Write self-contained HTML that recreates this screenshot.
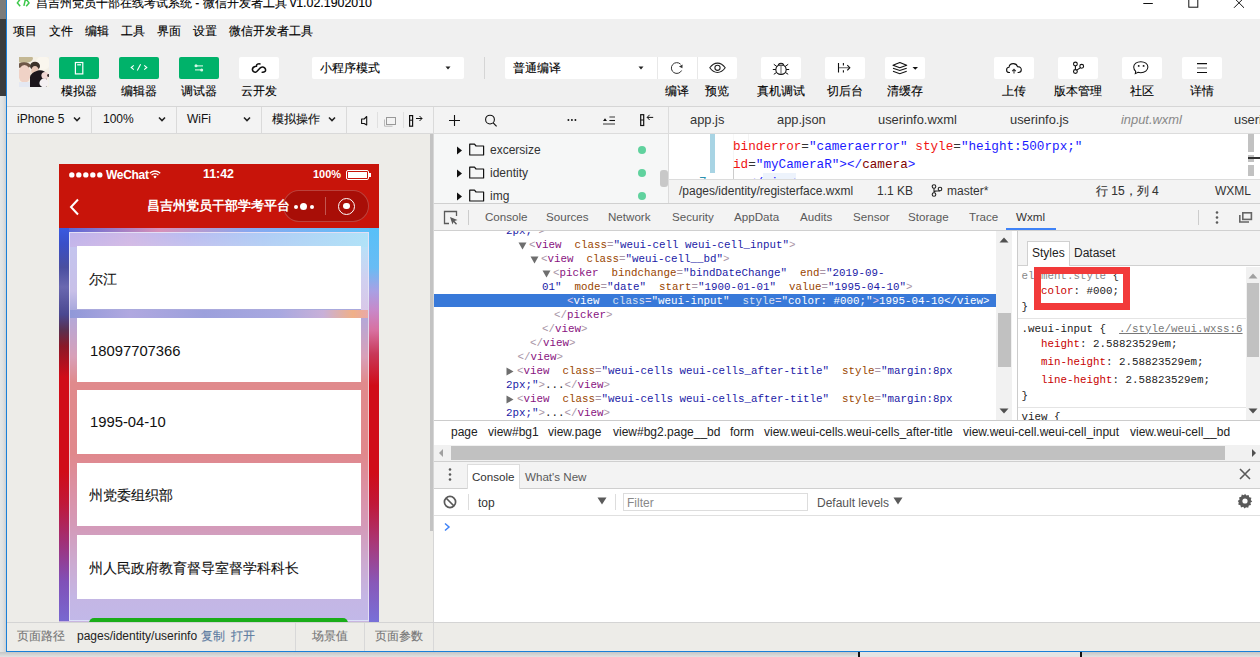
<!DOCTYPE html>
<html><head><meta charset="utf-8">
<style>
*{box-sizing:border-box;margin:0;padding:0}
html,body{width:1260px;height:657px;overflow:hidden;background:#dcdcdc;font-family:"Liberation Sans",sans-serif;color:#000}
.a{position:absolute}
.t{position:absolute;white-space:nowrap;line-height:1}
.mono{font-family:"Liberation Mono",monospace}
.btn{position:absolute;top:57px;width:40px;height:22px;border-radius:2px;background:#fff}
.gbtn{background:#00b26a}
.lbl{position:absolute;top:85px;font-size:12px;line-height:13px;white-space:nowrap;color:#000}
.vd{position:absolute;width:1px;background:#d5d5d5}
.hd{position:absolute;height:1px;background:#d5d5d5}
</style></head><body>
<!-- desktop strip -->
<div class="a" style="left:0;top:0;width:6px;height:19px;background:#7b7b7b"></div>
<div class="a" style="left:0;top:19px;width:6px;height:77px;background:#3b3b3b"></div>
<div class="a" style="left:0;top:96px;width:6px;height:561px;background:linear-gradient(90deg,#e4e6e6,#dfe1e1 50%,#cdd0d2)"></div>
<!-- window -->
<div class="a" id="win" style="left:6px;top:0;width:1254px;height:652px;background:#f0f0f0;border-left:1px solid #1a7fd8;border-bottom:1px solid #1a7fd8;overflow:hidden">
</div>
<!-- title bar -->
<div class="a" style="left:7px;top:0;width:1253px;height:19px;background:#fff"></div>
<svg class="a" style="left:12px;top:0" width="24" height="10"><path d="M8.2 -0.8L5.4 2.9L8.2 6.2M13.4 -0.5L11.9 5.8M14.2 -0.8L17 2.9L14.2 6.2" stroke="#3cc84a" stroke-width="1.5" fill="none"/></svg>
<div class="t" style="-webkit-text-stroke:0.12px currentColor;left:36px;top:-3px;font-size:12px;color:#000">昌吉州党员干部在线考试系统 - 微信开发者工具 <span style="font-size:12.4px">v1.02.1902010</span></div>
<svg class="a" style="left:1140px;top:0" width="110" height="10"><path d="M3.3 3.5H12.8" stroke="#111" stroke-width="1"/><rect x="48.8" y="-3" width="9" height="10.2" stroke="#111" stroke-width="1" fill="none"/><path d="M94 -2.2L104 7.8M104 -2.2L94 7.8" stroke="#111" stroke-width="1" fill="none"/></svg>
<!-- menu -->
<div class="t" style="-webkit-text-stroke:0.12px currentColor;left:13px;top:25px;font-size:12px">项目</div>
<div class="t" style="-webkit-text-stroke:0.12px currentColor;left:49px;top:25px;font-size:12px">文件</div>
<div class="t" style="-webkit-text-stroke:0.12px currentColor;left:85px;top:25px;font-size:12px">编辑</div>
<div class="t" style="-webkit-text-stroke:0.12px currentColor;left:121px;top:25px;font-size:12px">工具</div>
<div class="t" style="-webkit-text-stroke:0.12px currentColor;left:157px;top:25px;font-size:12px">界面</div>
<div class="t" style="-webkit-text-stroke:0.12px currentColor;left:193px;top:25px;font-size:12px">设置</div>
<div class="t" style="-webkit-text-stroke:0.12px currentColor;left:229px;top:25px;font-size:12px">微信开发者工具</div>

<!-- toolbar -->
<svg class="a" style="left:19px;top:57px" width="30" height="30"><defs><filter id="bl" x="-10%" y="-10%" width="120%" height="120%"><feGaussianBlur stdDeviation="0.6"/></filter><clipPath id="cp"><rect width="30" height="30"/></clipPath></defs><g clip-path="url(#cp)"><rect width="30" height="30" fill="#f4f0e6"/><g filter="url(#bl)"><ellipse cx="5" cy="1.5" rx="9" ry="4.5" fill="#c4b894"/><ellipse cx="24" cy="6" rx="7" ry="7" fill="#faf6ee"/><ellipse cx="5" cy="8.5" rx="6.5" ry="3.2" fill="#6e5646"/><ellipse cx="5.5" cy="17" rx="6.2" ry="9" fill="#f0d2c6"/><rect x="-1" y="25" width="14" height="6" fill="#e4e8f2"/><ellipse cx="16" cy="9" rx="5" ry="4.3" fill="#3a302c"/><ellipse cx="16" cy="14" rx="3.8" ry="5" fill="#e6c6b6"/><path d="M11 30V20C12 16 15.5 14.5 19 13.5C23 12.8 26 14 27.5 17V30Z" fill="#1a181c"/><ellipse cx="26" cy="18.5" rx="3.6" ry="3.6" fill="#f0d8d4"/><circle cx="29.5" cy="18.5" r="1.4" fill="#3a3030"/><ellipse cx="25" cy="26" rx="4.6" ry="4.4" fill="#f4f0f2"/></g></g></svg>
<div class="btn gbtn" style="left:59px"></div>
<div class="btn gbtn" style="left:119px"></div>
<div class="btn gbtn" style="left:179px"></div>
<div class="btn" style="left:239px"></div>
<div class="lbl" style="-webkit-text-stroke:0.12px currentColor;left:61px">模拟器</div>
<div class="lbl" style="-webkit-text-stroke:0.12px currentColor;left:121px">编辑器</div>
<div class="lbl" style="-webkit-text-stroke:0.12px currentColor;left:181px">调试器</div>
<div class="lbl" style="-webkit-text-stroke:0.12px currentColor;left:241px">云开发</div>

<div class="btn" style="left:312px;width:152px"></div>
<div class="t" style="-webkit-text-stroke:0.12px currentColor;left:320px;top:62px;font-size:12px;line-height:13px">小程序模式</div>
<div class="vd" style="left:484px;top:57px;height:22px"></div>
<div class="btn" style="left:505px;width:232px"></div>
<div class="t" style="-webkit-text-stroke:0.12px currentColor;left:513px;top:62px;font-size:12px;line-height:13px">普通编译</div>
<div class="vd" style="left:657px;top:57px;height:22px;background:#e8e8e8"></div>
<div class="vd" style="left:697px;top:57px;height:22px;background:#e8e8e8"></div>
<div class="lbl" style="-webkit-text-stroke:0.12px currentColor;left:665px">编译</div>
<div class="lbl" style="-webkit-text-stroke:0.12px currentColor;left:705px">预览</div>

<div class="btn" style="left:761px"></div>
<div class="btn" style="left:825px"></div>
<div class="btn" style="left:885px"></div>
<div class="lbl" style="-webkit-text-stroke:0.12px currentColor;left:757px">真机调试</div>
<div class="lbl" style="-webkit-text-stroke:0.12px currentColor;left:827px">切后台</div>
<div class="lbl" style="-webkit-text-stroke:0.12px currentColor;left:887px">清缓存</div>

<div class="btn" style="left:994px"></div>
<div class="btn" style="left:1058px"></div>
<div class="btn" style="left:1122px"></div>
<div class="btn" style="left:1182px"></div>
<div class="lbl" style="-webkit-text-stroke:0.12px currentColor;left:1002px">上传</div>
<div class="lbl" style="-webkit-text-stroke:0.12px currentColor;left:1054px">版本管理</div>
<div class="lbl" style="-webkit-text-stroke:0.12px currentColor;left:1130px">社区</div>
<div class="lbl" style="-webkit-text-stroke:0.12px currentColor;left:1190px">详情</div>

<div class="hd" style="left:7px;top:106px;width:1253px;background:#d6d6d6"></div>
<!-- toolbar icons -->
<svg class="a" style="left:59px;top:57px" width="40" height="22"><rect x="16.4" y="5.5" width="7.4" height="11.4" stroke="#fff" stroke-width="1.2" fill="none"/><path d="M18.2 7.8H22" stroke="#fff" stroke-width="1.2"/></svg>
<svg class="a" style="left:119px;top:57px" width="40" height="22"><path d="M14.8 8.3L12.2 10.5L14.8 12.7M21.6 7.2L18.3 13.6M25.2 8.3L27.8 10.5L25.2 12.7" stroke="#fff" stroke-width="1.1" fill="none"/></svg>
<svg class="a" style="left:179px;top:57px" width="40" height="22"><path d="M17 8.8H24M16 12.9H23" stroke="#bff0d6" stroke-width="1.3"/><circle cx="17" cy="8.8" r="1.5" fill="#d8f8e8"/><circle cx="22.7" cy="12.9" r="1.5" fill="#d8f8e8"/></svg>
<svg class="a" style="left:251px;top:62px" width="16" height="12"><path d="M9 1.9C7.2 1.5 5.4 2.2 5.4 4.2C3.2 4.5 1.3 6 1.4 7.7C1.6 9.5 3.2 10.4 4.6 10.2C6.6 9.9 8.3 5.3 11.2 5.1C13.1 5 14.6 6.3 14.6 7.9C14.6 9.4 13.3 10.5 11.2 10.2" stroke="#111" stroke-width="1.55" fill="none" stroke-linecap="round"/></svg>
<svg class="a" style="left:444px;top:65px" width="8" height="6"><path d="M1.5 1.5H6.5L4 4.5Z" fill="#222"/></svg>
<svg class="a" style="left:637px;top:65px" width="8" height="6"><path d="M1.5 1.5H6.5L4 4.5Z" fill="#222"/></svg>
<svg class="a" style="left:669px;top:61px" width="16" height="14"><path d="M11.6 3.2A5.4 5.4 0 1 0 12.6 9.5" stroke="#333" stroke-width="1" fill="none"/><path d="M10 5.6L13.4 7.3L13.6 3.6Z" fill="#333"/></svg>
<svg class="a" style="left:708px;top:61px" width="19" height="14"><path d="M1.8 6.8C4.5 3 7 2.1 9.5 2.1C12 2.1 14.5 3 17.2 6.8C14.5 10.6 12 11.5 9.5 11.5C7 11.5 4.5 10.6 1.8 6.8Z" stroke="#222" stroke-width="1.1" fill="none"/><circle cx="9.5" cy="6.8" r="2.6" stroke="#222" stroke-width="1.1" fill="none"/></svg>
<svg class="a" style="left:772px;top:61px" width="18" height="15"><path d="M9 2.2C7.5 2.2 6.5 3.2 6.3 4.2C4.4 5.2 3.8 7 3.8 8.5C3.8 11.3 6 13.4 9 13.4C12 13.4 14.2 11.3 14.2 8.5C14.2 7 13.6 5.2 11.7 4.2C11.5 3.2 10.5 2.2 9 2.2Z" stroke="#111" stroke-width="1.1" fill="none"/><path d="M6.4 4.2H11.6" stroke="#111" stroke-width="1.1"/><path d="M9 4.5V13" stroke="#777" stroke-width="1.2"/><path d="M4.7 5.3L1.8 3.3M3.8 8.5H0.8M4.4 11.6L1.8 13.3M13.3 5.3L16.2 3.3M14.2 8.5H17.2M13.6 11.6L16.2 13.3" stroke="#111" stroke-width="1" fill="none"/></svg>
<svg class="a" style="left:836px;top:61px" width="16" height="14"><path d="M2.5 2V11.6M7.4 2V4.6M7.4 9.2V11.6" stroke="#111" stroke-width="1.1"/><path d="M3 6.7H13.2" stroke="#777" stroke-width="1.2"/><path d="M11.3 4.2L13.8 6.7L11.3 9.3" stroke="#111" stroke-width="1.1" fill="none"/></svg>
<svg class="a" style="left:891px;top:61px" width="30" height="15"><path d="M2 4.3L8.8 1.5L15.7 4.3L8.8 6.7Z" stroke="#111" stroke-width="1.1" fill="none" stroke-linejoin="round"/><path d="M2 7.3L8.8 9.5L15.7 7.3M2 10.3L8.8 12.7L15.7 10.3" stroke="#111" stroke-width="1.1" fill="none"/><path d="M21.5 6H27L24.25 8.8Z" fill="#111"/></svg>
<svg class="a" style="left:1005px;top:62px" width="18" height="13"><path d="M5 10.5H4.2C2.6 10.5 1.6 9.3 1.6 7.9C1.6 6.5 2.7 5.4 4 5.3C4.3 3.1 6.1 1.6 8.3 1.6C10.5 1.6 12 2.9 12.5 4.6C14.7 4.5 16.3 5.9 16.3 7.8C16.3 9.4 15 10.5 13.5 10.5H12.6" stroke="#111" stroke-width="1.1" fill="none"/><path d="M9 11.5V7.5M7.2 9.2L9 7.3L10.8 9.2" stroke="#333" stroke-width="1.1" fill="none"/></svg>
<svg class="a" style="left:1069px;top:60px" width="16" height="15"><circle cx="6.4" cy="4" r="1.9" stroke="#111" stroke-width="1.1" fill="none"/><circle cx="6.4" cy="11.5" r="1.9" stroke="#111" stroke-width="1.1" fill="none"/><circle cx="12.7" cy="6.3" r="1.9" stroke="#111" stroke-width="1.1" fill="none"/><path d="M6.4 5.9V9.6M7.8 10.1L11.4 7.7" stroke="#111" stroke-width="1.1" fill="none"/></svg>
<svg class="a" style="left:1132px;top:60px" width="18" height="15"><path d="M8.8 1.7C12.7 1.7 15.9 3.9 15.9 7.1C15.9 10.3 12.7 12.7 8.8 12.7C7.8 12.7 6.9 12.6 6 12.3L3.3 13.6L3.7 11.3C2.4 10.2 1.7 8.8 1.7 7.1C1.7 3.9 4.9 1.7 8.8 1.7Z" stroke="#111" stroke-width="1.05" fill="none"/><circle cx="6.7" cy="5.9" r="0.95" fill="#111"/><circle cx="11.6" cy="5.9" r="0.95" fill="#111"/></svg>
<svg class="a" style="left:1195px;top:61px" width="14" height="14"><path d="M2 2.6H12M2 11.5H12" stroke="#111" stroke-width="1.1"/><path d="M2 7H12" stroke="#888" stroke-width="1.3"/></svg>


<!-- ===== simulator panel ===== -->
<div class="a" style="left:7px;top:107px;width:427px;height:26px;background:#f3f3f3"></div>
<div class="hd" style="left:7px;top:133px;width:427px;background:#d9d9d9"></div>
<div class="vd" style="left:91px;top:107px;height:26px;background:#dadada"></div>
<div class="vd" style="left:176px;top:107px;height:26px;background:#dadada"></div>
<div class="vd" style="left:261px;top:107px;height:26px;background:#dadada"></div>
<div class="vd" style="left:346px;top:107px;height:26px;background:#dadada"></div>
<div class="t" style="left:17px;top:113px;font-size:12px;color:#111">iPhone 5</div>
<div class="t" style="left:103px;top:113px;font-size:12px;color:#111">100%</div>
<div class="t" style="left:187px;top:113px;font-size:12px;color:#111">WiFi</div>
<div class="t" style="-webkit-text-stroke:0.12px currentColor;left:272px;top:113px;font-size:12px;color:#111">模拟操作</div>
<svg class="a" style="left:73px;top:116px" width="8" height="6"><path d="M1 1.5L4 4.5L7 1.5" stroke="#222" stroke-width="1.6" fill="none"/></svg>
<svg class="a" style="left:158px;top:116px" width="8" height="6"><path d="M1 1.5L4 4.5L7 1.5" stroke="#222" stroke-width="1.6" fill="none"/></svg>
<svg class="a" style="left:243px;top:116px" width="8" height="6"><path d="M1 1.5L4 4.5L7 1.5" stroke="#222" stroke-width="1.6" fill="none"/></svg>
<svg class="a" style="left:328px;top:116px" width="8" height="6"><path d="M1 1.5L4 4.5L7 1.5" stroke="#222" stroke-width="1.6" fill="none"/></svg>
<svg class="a" style="left:358px;top:113px" width="12" height="14"><path d="M6.2 6H3.6V10.5H6.2L8.7 12V3.5Z" stroke="#111" stroke-width="1.1" fill="none" stroke-linejoin="round"/></svg>
<div class="vd" style="left:377px;top:112px;height:16px;background:#e0e0e0"></div>
<svg class="a" style="left:383px;top:113px" width="15" height="14"><rect x="3.5" y="4.5" width="9" height="7" stroke="#999" fill="none"/><path d="M1.5 6.5V13.2H9.5" stroke="#bbb" fill="none"/></svg>
<div class="vd" style="left:403px;top:112px;height:16px;background:#e0e0e0"></div>
<svg class="a" style="left:408px;top:112px" width="16" height="16"><rect x="1.6" y="3.6" width="3" height="10.6" stroke="#111" stroke-width="1.2" fill="none"/><path d="M1.6 8.2H4.6" stroke="#111" stroke-width="1"/><path d="M8 6.5H14M11.5 4L14 6.5L11.5 9" stroke="#111" stroke-width="1" fill="none"/></svg>
<div class="vd" style="left:433px;top:107px;height:26px;background:#dadada"></div>

<div class="a" style="left:7px;top:134px;width:427px;height:488px;background:#edece8"></div>
<div class="a" style="left:430px;top:134px;width:4px;height:397px;background:#c3c3c3"></div>
<div class="vd" style="left:433px;top:134px;height:517px;background:#d6d6d6"></div>

<!-- phone -->
<div class="a" id="phone" style="left:59px;top:164px;width:320px;height:458px;overflow:hidden;background:#c9b6e0">
  <div class="a" style="left:0;top:64px;width:10px;height:393px;background:linear-gradient(180deg,#3a5ae0 0%,#3a50c8 4%,#4a4ea0 10%,#6a68b0 15%,#4a4890 22%,#5a3050 26%,#8a1828 30%,#d00c18 38%,#d00c18 62%,#c01838 70%,#a03078 80%,#8050b8 90%,#7868d0 100%)"></div>
  <div class="a" style="left:310px;top:64px;width:10px;height:394px;background:linear-gradient(180deg,#58c0f8 0%,#68bcf4 10%,#a8a0e4 16%,#c888c8 21%,#d870a0 26%,#c83858 32%,#d00c18 40%,#d00c18 62%,#c01838 70%,#a83878 80%,#8858b8 90%,#7870d8 100%)"></div>
  <div class="a" style="left:10px;top:64px;width:300px;height:4px;background:linear-gradient(90deg,#5a68d8,#d890b8 30%,#88a8f0 60%,#60c0f8)"></div>
  <div class="a" style="left:10px;top:68px;width:300px;height:389px;border:1px solid rgba(255,255,255,0.55);background:linear-gradient(180deg,#b4bcf2 0%,#c4c4ee 3.6%,#c8c0e8 15%,#a8a8dc 20%,#b4a8d8 22%,#d8a0b8 32%,#e08a8c 38.6%,#e0888c 57%,#da92a8 68%,#d49ab8 75.6%,#ccaad0 85%,#c4b6e4 94%,#c2b8e8 100%)"></div>
  <div class="a" style="left:11px;top:69px;width:298px;height:14px;background:linear-gradient(90deg,rgba(200,170,230,0.5),rgba(230,180,220,0.5) 20%,rgba(200,190,240,0.2) 40%,rgba(170,220,250,0.5) 65%,rgba(176,228,248,0.95))"></div>
  <div class="a" style="left:302px;top:83px;width:7px;height:63px;background:linear-gradient(180deg,#b8e0f8,#d0d0f0 50%,#d8c8e8)"></div>
  <div class="a" style="left:11px;top:146px;width:298px;height:8px;background:linear-gradient(90deg,#9098d8,#b0a8e0 20%,#9ca0dc 45%,#a8a8e0 70%,#c8b0d8 85%,#f0b088 95%,#e8a8a8)"></div>
  <div class="a" style="left:18px;top:82px;width:284px;height:63px;background:#fff"></div>
  <div class="a" style="left:18px;top:154px;width:284px;height:64px;background:#fff"></div>
  <div class="a" style="left:18px;top:226px;width:284px;height:64px;background:#fff"></div>
  <div class="a" style="left:18px;top:299px;width:284px;height:63px;background:#fff"></div>
  <div class="a" style="left:18px;top:371px;width:284px;height:64px;background:#fff"></div>
  <div class="a" style="left:30px;top:454px;width:259px;height:20px;border-radius:5px;background:#1aad19"></div>
  <div class="t" style="-webkit-text-stroke:0.12px currentColor;left:30px;top:108px;font-size:14px;color:#111">尔江</div>
  <div class="t" style="left:31px;top:179.5px;font-size:14.8px;color:#111">18097707366</div>
  <div class="t" style="left:31px;top:250.5px;font-size:14.8px;color:#111">1995-04-10</div>
  <div class="t" style="-webkit-text-stroke:0.12px currentColor;left:30px;top:324px;font-size:14px;color:#111">州党委组织部</div>
  <div class="t" style="-webkit-text-stroke:0.12px currentColor;left:30px;top:397px;font-size:14px;color:#111">州人民政府教育督导室督学科科长</div>
  <div class="a" style="left:0;top:0;width:320px;height:64px;background:#c8140a"></div>
  <!-- status bar -->
  <svg class="a" style="left:10px;top:8px" width="36" height="6"><circle cx="2.8" cy="2.9" r="2.7" fill="#fff"/><circle cx="9.8" cy="2.9" r="2.7" fill="#fff"/><circle cx="16.8" cy="2.9" r="2.7" fill="#fff"/><circle cx="23.8" cy="2.9" r="2.7" fill="#fff"/><circle cx="30.8" cy="2.9" r="2.7" fill="#fff"/></svg>
  <div class="t" style="left:47px;top:5px;font-size:12px;color:#fff;font-weight:bold;letter-spacing:-0.3px">WeChat</div>
  <svg class="a" style="left:90px;top:6px" width="12" height="9"><path d="M0.8 3.3A7 7 0 0 1 11.2 3.3M2.6 5.1A4.5 4.5 0 0 1 9.4 5.1" stroke="#fff" stroke-width="1.3" fill="none"/><path d="M4.3 6.8L6 8.6L7.7 6.8A2.3 2.3 0 0 0 4.3 6.8Z" fill="#fff"/></svg>
  <div class="t" style="left:144px;top:4px;font-size:12.4px;color:#fff;font-weight:bold">11:42</div>
  <div class="t" style="left:254px;top:5px;font-size:11px;color:#fff;font-weight:bold">100%</div>
  <div class="a" style="left:287px;top:6px;width:23px;height:10px;border:1px solid #fff;border-radius:2px;padding:1px"><div style="width:100%;height:100%;background:#fff"></div></div>
  <div class="a" style="left:310px;top:9px;width:2px;height:4px;background:#fff"></div>
  <!-- nav -->
  <svg class="a" style="left:9px;top:34px" width="12" height="18"><path d="M10 1.5L3 9L10 16.5" stroke="#fff" stroke-width="2" fill="none"/></svg>
  <div class="a" style="left:224px;top:26px;width:86px;height:32px;border-radius:16px;background:rgba(120,6,2,0.4);border:1px solid rgba(255,255,255,0.22)"></div>
  <div class="t" style="left:88px;top:35px;font-size:13px;color:#fff;font-weight:bold">昌吉州党员干部学考平台</div>
  <div class="a" style="left:266px;top:33px;width:1px;height:18px;background:rgba(255,255,255,0.3)"></div>
  <div class="a" style="left:234.5px;top:40.5px;width:4.6px;height:4.6px;border-radius:3px;background:#fff"></div>
  <div class="a" style="left:241.4px;top:39px;width:7px;height:7px;border-radius:4px;background:#fff"></div>
  <div class="a" style="left:250.8px;top:40.5px;width:4.6px;height:4.6px;border-radius:3px;background:#fff"></div>
  <div class="a" style="left:279px;top:33.5px;width:17px;height:17px;border-radius:9px;border:1.8px solid #fff"></div>
  <div class="a" style="left:284.3px;top:38.8px;width:6.4px;height:6.4px;border-radius:4px;background:#fff"></div>
</div>

<!-- ===== file tree ===== -->
<div class="a" style="left:434px;top:107px;width:235px;height:26px;background:#f3f3f3"></div>
<div class="hd" style="left:434px;top:133px;width:235px;background:#dcdcdc"></div>
<div class="a" style="left:434px;top:134px;width:235px;height:69px;background:#f6f7f7"></div>
<svg class="a" style="left:448px;top:115px" width="13" height="12"><path d="M6.5 0V11M1 5.5H12" stroke="#111" stroke-width="1.1" fill="none"/></svg>
<svg class="a" style="left:484px;top:114px" width="14" height="13"><circle cx="6" cy="5.6" r="4.4" stroke="#111" stroke-width="1.1" fill="none"/><path d="M9.2 8.8L12.6 12.3" stroke="#111" stroke-width="1.2"/></svg>
<svg class="a" style="left:566px;top:118px" width="12" height="4"><circle cx="2.4" cy="2" r="0.95" fill="#111"/><circle cx="5.9" cy="2" r="0.95" fill="#111"/><circle cx="9.4" cy="2" r="0.95" fill="#111"/></svg>
<svg class="a" style="left:602px;top:114px" width="14" height="12"><path d="M1 7L3 4.3L5 7Z" fill="#111"/><path d="M7.4 3H13M1 10H13" stroke="#777" stroke-width="1.3"/><path d="M7.4 6.5H13" stroke="#111" stroke-width="1.1"/></svg>
<svg class="a" style="left:639px;top:111px" width="16" height="16"><rect x="1.7" y="3.7" width="3" height="10.8" stroke="#111" stroke-width="1.2" fill="none"/><path d="M1.7 9H4.7" stroke="#111" stroke-width="1"/><path d="M14.2 6.4H8.2M10.6 3.8L8.2 6.4L10.6 9" stroke="#111" stroke-width="1" fill="none"/></svg>
<div class="a" style="left:660px;top:170px;width:8px;height:17px;border-radius:3px;background:#c8c8c8"></div>

<svg class="a" style="left:456px;top:146px" width="7" height="9"><path d="M1 0.5L6 4.5L1 8.5Z" fill="#111"/></svg>
<svg class="a" style="left:469px;top:143px" width="16" height="13"><path d="M0.7 1.2H5.5L7 3H14.6V12H0.7Z" stroke="#111" stroke-width="1.2" fill="none" stroke-linejoin="round"/></svg>
<div class="t" style="left:490px;top:144px;font-size:12px;color:#333">excersize</div>
<div class="a" style="left:638.2px;top:145.8px;width:8.2px;height:8.2px;border-radius:5px;background:#60d29e"></div>
<svg class="a" style="left:456px;top:169px" width="7" height="9"><path d="M1 0.5L6 4.5L1 8.5Z" fill="#111"/></svg>
<svg class="a" style="left:469px;top:166px" width="16" height="13"><path d="M0.7 1.2H5.5L7 3H14.6V12H0.7Z" stroke="#111" stroke-width="1.2" fill="none" stroke-linejoin="round"/></svg>
<div class="t" style="left:490px;top:167px;font-size:12px;color:#333">identity</div>
<div class="a" style="left:638.2px;top:168.8px;width:8.2px;height:8.2px;border-radius:5px;background:#60d29e"></div>
<svg class="a" style="left:456px;top:192px" width="7" height="9"><path d="M1 0.5L6 4.5L1 8.5Z" fill="#111"/></svg>
<svg class="a" style="left:469px;top:189px" width="16" height="13"><path d="M0.7 1.2H5.5L7 3H14.6V12H0.7Z" stroke="#111" stroke-width="1.2" fill="none" stroke-linejoin="round"/></svg>
<div class="t" style="left:490px;top:190px;font-size:12px;color:#333">img</div>
<div class="a" style="left:638.2px;top:191.8px;width:8.2px;height:8.2px;border-radius:5px;background:#60d29e"></div>
<div class="vd" style="left:668px;top:107px;height:96px;background:#dcdcdc"></div>

<!-- ===== editor ===== -->
<div class="a" style="left:669px;top:107px;width:591px;height:26px;background:#f3f3f3"></div>
<div class="hd" style="left:669px;top:133px;width:591px;background:#dcdcdc"></div>
<div class="t" style="left:690px;top:114px;font-size:12.9px;color:#333">app.js</div>
<div class="t" style="left:777px;top:114px;font-size:12.9px;color:#333">app.json</div>
<div class="t" style="left:878px;top:114px;font-size:12.9px;color:#333">userinfo.wxml</div>
<div class="t" style="left:1010px;top:114px;font-size:12.9px;color:#333">userinfo.js</div>
<div class="t" style="left:1121px;top:114px;font-size:12.9px;color:#888;font-style:italic">input.wxml</div>
<div class="t" style="left:1234px;top:114px;font-size:12.9px;color:#333">userinfo.js</div>
<div class="a" style="left:669px;top:134px;width:591px;height:45px;background:#fff;overflow:hidden">
  <div class="a" style="left:41px;top:0;width:5px;height:39px;background:#a8d4e4"></div>
  <div class="a" style="left:64px;top:0;width:1px;height:45px;background:linear-gradient(180deg,#f8f8f8,#f4f4f4 70%,#ccc 80%)"></div>
  <div class="a" style="left:79px;top:0;width:1px;height:8px;background:#f4f4f4"></div>
  <div class="a" style="left:94px;top:39px;width:33px;height:6px;background:#edf3fc"></div>
  <div class="t mono" style="white-space:pre;left:64px;top:4px;font-size:12.66px;line-height:18px"><span style="color:#f01414">binderror</span><span style="color:#333">=</span><span style="color:#1a1aff">"cameraerror"</span> <span style="color:#f01414">style</span><span style="color:#333">=</span><span style="color:#1a1aff">"height:500rpx;"</span></div>
  <div class="t mono" style="white-space:pre;left:64px;top:22px;font-size:12.66px;line-height:18px"><span style="color:#f01414">id</span><span style="color:#333">=</span><span style="color:#1a1aff">"myCameraR"</span><span style="color:#1a1aff">&gt;&lt;/</span><span style="color:#800000">camera</span><span style="color:#1a1aff">&gt;</span></div>
  <div class="t mono" style="white-space:pre;left:30px;top:40px;font-size:12.66px;line-height:18px;color:#2b91af">7</div>
  <div class="t mono" style="white-space:pre;left:79px;top:40px;font-size:12.66px;line-height:18px;color:#1a1aff">&lt;/view&gt;</div>
  <div class="a" style="left:579px;top:0;width:6px;height:18px;background:#c2c2c2"></div>
  <div class="a" style="left:579px;top:21px;width:6px;height:7px;background:#c2c2c2"></div>
  <div class="a" style="left:579px;top:23px;width:12px;height:1.6px;background:#333"></div>
  <div class="a" style="left:579px;top:31px;width:6px;height:11px;background:#c2c2c2"></div>
</div>
<div class="a" style="left:669px;top:179px;width:591px;height:24px;background:#f3f3f3;border-top:1px solid #dcdcdc"></div>
<div class="t" style="left:679px;top:185px;font-size:12px;color:#333">/pages/identity/registerface.wxml</div>
<div class="t" style="left:877px;top:185px;font-size:12px;color:#333">1.1 KB</div>
<svg class="a" style="left:931px;top:184px" width="12" height="13"><circle cx="3" cy="2.5" r="1.8" stroke="#222" stroke-width="1.1" fill="none"/><circle cx="3" cy="10.5" r="1.8" stroke="#222" stroke-width="1.1" fill="none"/><circle cx="9" cy="5" r="1.8" stroke="#222" stroke-width="1.1" fill="none"/><path d="M3 4.3V8.7M3 8.5C3 6 8 7.5 9 6.8" stroke="#222" stroke-width="1.1" fill="none"/></svg>
<div class="t" style="left:947px;top:185px;font-size:12px;color:#333">master*</div>
<div class="t" style="-webkit-text-stroke:0.12px currentColor;left:1096px;top:185px;font-size:12px;color:#333">行 15，列 4</div>
<div class="t" style="left:1215px;top:185px;font-size:12px;color:#333">WXML</div>

<!-- ===== devtools ===== -->
<div class="a" style="left:434px;top:203px;width:826px;height:28px;background:#f3f3f3;border-top:1px solid #d0d0d0;border-bottom:1px solid #d0d0d0"></div>
<svg class="a" style="left:443px;top:210px" width="16" height="15"><path d="M6 13.5H1.5V1.5H13.5V6" stroke="#5a5a5a" stroke-width="1.3" fill="none"/><path d="M7 7L14.5 10L11.5 11L14 13.7L13 14.7L10.5 12L9.5 14.5Z" fill="#5a5a5a"/></svg>
<div class="vd" style="left:468px;top:210px;height:15px;background:#ccc"></div>
<div class="t" style="left:485px;top:211px;font-size:11.6px;color:#5a5a5a">Console</div>
<div class="t" style="left:546px;top:211px;font-size:11.6px;color:#5a5a5a">Sources</div>
<div class="t" style="left:608px;top:211px;font-size:11.6px;color:#5a5a5a">Network</div>
<div class="t" style="left:672px;top:211px;font-size:11.6px;color:#5a5a5a">Security</div>
<div class="t" style="left:734px;top:211px;font-size:11.6px;color:#5a5a5a">AppData</div>
<div class="t" style="left:800px;top:211px;font-size:11.6px;color:#5a5a5a">Audits</div>
<div class="t" style="left:853px;top:211px;font-size:11.6px;color:#5a5a5a">Sensor</div>
<div class="t" style="left:908px;top:211px;font-size:11.6px;color:#5a5a5a">Storage</div>
<div class="t" style="left:969px;top:211px;font-size:11.6px;color:#5a5a5a">Trace</div>
<div class="t" style="left:1016px;top:211px;font-size:11.6px;color:#333">Wxml</div>
<div class="a" style="left:1006px;top:228px;width:50px;height:2px;background:#3e82f7"></div>
<div class="vd" style="left:1198px;top:210px;height:15px;background:#ccc"></div>
<svg class="a" style="left:1215px;top:210px" width="4" height="15"><circle cx="2" cy="2.5" r="1.3" fill="#5a5a5a"/><circle cx="2" cy="7.5" r="1.3" fill="#5a5a5a"/><circle cx="2" cy="12.5" r="1.3" fill="#5a5a5a"/></svg>
<svg class="a" style="left:1238px;top:210px" width="16" height="14"><path d="M1.8 5V12H11" stroke="#666" stroke-width="1.6" fill="none"/><rect x="4.8" y="2.8" width="8.6" height="6.6" stroke="#666" stroke-width="1.6" fill="none"/></svg>

<!-- elements -->
<div class="a" style="left:434px;top:231px;width:583px;height:189px;background:#fff;overflow:hidden" id="elems">
<div class="a" style="left:0;top:63px;width:562px;height:13px;background:#3879d9"></div>
<div class="t mono" style="white-space:pre;left:72px;top:-7.5px;font-size:10.83px;line-height:14px"><span style="color:#1a1aa6">2px;"</span><span style="color:#a894a6">&gt;</span></div>
<div class="t mono" style="white-space:pre;left:95px;top:6.5px;font-size:10.83px;line-height:14px"><span style="color:#a894a6">&lt;</span><span style="color:#881280">view</span>  <span style="color:#994500">class</span><span style="color:#a894a6">=</span><span style="color:#1a1aa6">"weui-cell weui-cell_input"</span><span style="color:#a894a6">&gt;</span></div>
<svg class="a" style="left:84px;top:10.5px" width="9" height="8"><path d="M0.5 0.5H8.5L4.5 7.5Z" fill="#6e6e6e"/></svg>
<div class="t mono" style="white-space:pre;left:107px;top:20.5px;font-size:10.83px;line-height:14px"><span style="color:#a894a6">&lt;</span><span style="color:#881280">view</span>  <span style="color:#994500">class</span><span style="color:#a894a6">=</span><span style="color:#1a1aa6">"weui-cell__bd"</span><span style="color:#a894a6">&gt;</span></div>
<svg class="a" style="left:96px;top:24.5px" width="9" height="8"><path d="M0.5 0.5H8.5L4.5 7.5Z" fill="#6e6e6e"/></svg>
<div class="t mono" style="white-space:pre;left:119px;top:34.5px;font-size:10.83px;line-height:14px"><span style="color:#a894a6">&lt;</span><span style="color:#881280">picker</span>  <span style="color:#994500">bindchange</span><span style="color:#a894a6">=</span><span style="color:#1a1aa6">"bindDateChange"</span>  <span style="color:#994500">end</span><span style="color:#a894a6">=</span><span style="color:#1a1aa6">"2019-09-</span></div>
<svg class="a" style="left:108px;top:38.5px" width="9" height="8"><path d="M0.5 0.5H8.5L4.5 7.5Z" fill="#6e6e6e"/></svg>
<div class="t mono" style="white-space:pre;left:108px;top:48.5px;font-size:10.83px;line-height:14px"><span style="color:#1a1aa6">01"</span>  <span style="color:#994500">mode</span><span style="color:#a894a6">=</span><span style="color:#1a1aa6">"date"</span>  <span style="color:#994500">start</span><span style="color:#a894a6">=</span><span style="color:#1a1aa6">"1900-01-01"</span>  <span style="color:#994500">value</span><span style="color:#a894a6">=</span><span style="color:#1a1aa6">"1995-04-10"</span><span style="color:#a894a6">&gt;</span></div>
<div class="t mono" style="white-space:pre;left:133px;top:62.5px;font-size:10.83px;line-height:14px"><span style="color:#e8c8e6">&lt;</span><span style="color:#fff">view</span>  <span style="color:#d8e0f0">class</span><span style="color:#e8d8f0">=</span><span style="color:#fff">"weui-input"</span>  <span style="color:#d8e0f0">style</span><span style="color:#e8d8f0">=</span><span style="color:#fff">"color: #000;"</span><span style="color:#e8c8e6">&gt;</span><span style="color:#fff">1995-04-10&lt;/view&gt;</span></div>
<div class="t mono" style="white-space:pre;left:120px;top:76.5px;font-size:10.83px;line-height:14px"><span style="color:#a894a6">&lt;/</span><span style="color:#881280">picker</span><span style="color:#a894a6">&gt;</span></div>
<div class="t mono" style="white-space:pre;left:108px;top:90.5px;font-size:10.83px;line-height:14px"><span style="color:#a894a6">&lt;/</span><span style="color:#881280">view</span><span style="color:#a894a6">&gt;</span></div>
<div class="t mono" style="white-space:pre;left:96px;top:104.5px;font-size:10.83px;line-height:14px"><span style="color:#a894a6">&lt;/</span><span style="color:#881280">view</span><span style="color:#a894a6">&gt;</span></div>
<div class="t mono" style="white-space:pre;left:83.5px;top:118.5px;font-size:10.83px;line-height:14px"><span style="color:#a894a6">&lt;/</span><span style="color:#881280">view</span><span style="color:#a894a6">&gt;</span></div>
<div class="t mono" style="white-space:pre;left:83px;top:132.5px;font-size:10.83px;line-height:14px"><span style="color:#a894a6">&lt;</span><span style="color:#881280">view</span>  <span style="color:#994500">class</span><span style="color:#a894a6">=</span><span style="color:#1a1aa6">"weui-cells weui-cells_after-title"</span>  <span style="color:#994500">style</span><span style="color:#a894a6">=</span><span style="color:#1a1aa6">"margin:8px</span></div>
<svg class="a" style="left:72px;top:135.5px" width="8" height="9"><path d="M0.5 0.5V8.5L7.5 4.5Z" fill="#6e6e6e"/></svg>
<div class="t mono" style="white-space:pre;left:72px;top:146.5px;font-size:10.83px;line-height:14px"><span style="color:#1a1aa6">2px;"</span><span style="color:#a894a6">&gt;</span><span style="color:#222">...</span><span style="color:#a894a6">&lt;/</span><span style="color:#881280">view</span><span style="color:#a894a6">&gt;</span></div>
<div class="t mono" style="white-space:pre;left:83px;top:160.5px;font-size:10.83px;line-height:14px"><span style="color:#a894a6">&lt;</span><span style="color:#881280">view</span>  <span style="color:#994500">class</span><span style="color:#a894a6">=</span><span style="color:#1a1aa6">"weui-cells weui-cells_after-title"</span>  <span style="color:#994500">style</span><span style="color:#a894a6">=</span><span style="color:#1a1aa6">"margin:8px</span></div>
<svg class="a" style="left:72px;top:163.5px" width="8" height="9"><path d="M0.5 0.5V8.5L7.5 4.5Z" fill="#6e6e6e"/></svg>
<div class="t mono" style="white-space:pre;left:72px;top:174.5px;font-size:10.83px;line-height:14px"><span style="color:#1a1aa6">2px;"</span><span style="color:#a894a6">&gt;</span><span style="color:#222">...</span><span style="color:#a894a6">&lt;/</span><span style="color:#881280">view</span><span style="color:#a894a6">&gt;</span></div>
<div class="a" style="left:562px;top:0;width:16px;height:189px;background:#f1f1f1"></div>
<div class="a" style="left:564px;top:82px;width:13px;height:54px;background:#c1c1c1"></div>
<svg class="a" style="left:565px;top:5px" width="10" height="7"><path d="M0.5 6.5L5 1.5L9.5 6.5Z" fill="#505050"/></svg>
<svg class="a" style="left:565px;top:177px" width="10" height="7"><path d="M0.5 0.5L5 5.5L9.5 0.5Z" fill="#505050"/></svg>
</div>
<!-- styles -->
<div class="a" style="left:1017px;top:231px;width:243px;height:189px;background:#fff;border-left:1px solid #ccc;overflow:hidden" id="styles">
<div class="a" style="left:0;top:0;width:242px;height:35px;background:#f3f3f3;border-bottom:1px solid #d0d0d0"></div>
<div class="a" style="left:9px;top:10px;width:43px;height:25px;background:#fff;border:1px solid #d0d0d0;border-bottom:none"></div>
<div class="t" style="left:14px;top:16px;font-size:12px;color:#222">Styles</div>
<div class="t" style="left:56px;top:16px;font-size:12px;color:#222">Dataset</div>
<div class="t mono" style="white-space:pre;left:3.6000000000000227px;top:37.80000000000001px;font-size:10.83px;line-height:14px;"><span style="color:#888">element.style</span> <span style="color:#333">{</span></div>
<div class="t mono" style="white-space:pre;left:23px;top:53.30000000000001px;font-size:10.83px;line-height:14px;"><span style="color:#c80000">color</span><span style="color:#222">: #000;</span></div>
<div class="t mono" style="white-space:pre;left:3.6000000000000227px;top:69px;font-size:10.83px;line-height:14px;"><span style="color:#222">}</span></div>
<div class="a" style="left:0;top:87px;width:228px;height:1px;background:#e4e4e4"></div>
<div class="t mono" style="white-space:pre;left:3.6000000000000227px;top:90.5px;font-size:10.83px;line-height:14px;"><span style="color:#222">.weui-input {</span>  <span style="color:#777;text-decoration:underline">./style/weui.wxss:6</span></div>
<div class="t mono" style="white-space:pre;left:23px;top:106.30000000000001px;font-size:10.83px;line-height:14px;"><span style="color:#c80000">height</span><span style="color:#222">: 2.58823529em;</span></div>
<div class="t mono" style="white-space:pre;left:23px;top:124px;font-size:10.83px;line-height:14px;"><span style="color:#c80000">min-height</span><span style="color:#222">: 2.58823529em;</span></div>
<div class="t mono" style="white-space:pre;left:23px;top:141.60000000000002px;font-size:10.83px;line-height:14px;"><span style="color:#c80000">line-height</span><span style="color:#222">: 2.58823529em;</span></div>
<div class="t mono" style="white-space:pre;left:3.6000000000000227px;top:158px;font-size:10.83px;line-height:14px;"><span style="color:#222">}</span></div>
<div class="a" style="left:0;top:176px;width:228px;height:1px;background:#e4e4e4"></div>
<div class="t mono" style="white-space:pre;left:3.6000000000000227px;top:179px;font-size:10.83px;line-height:14px;"><span style="color:#222">view {</span></div>
<div class="a" style="left:228px;top:36px;width:14px;height:153px;background:#f1f1f1"></div>
<div class="a" style="left:229px;top:52px;width:12px;height:74px;background:#c1c1c1"></div>
<svg class="a" style="left:230px;top:41px" width="10" height="7"><path d="M0.5 6.5L5 1.5L9.5 6.5Z" fill="#a0a0a0"/></svg>
<svg class="a" style="left:230px;top:177px" width="10" height="7"><path d="M0.5 0.5L5 5.5L9.5 0.5Z" fill="#505050"/></svg>
<div class="a" style="left:16px;top:36px;width:96px;height:43px;border:7px solid #f23a3a"></div>
</div>

<!-- breadcrumbs -->
<div class="a" style="left:434px;top:420px;width:826px;height:41px;background:#fff;border-top:1px solid #ccc"></div>
<div class="t" style="left:451px;top:426px;font-size:12px;color:#222">page</div>
<div class="t" style="left:488px;top:426px;font-size:12px;color:#222">view#bg1</div>
<div class="t" style="left:548px;top:426px;font-size:12px;color:#222">view.page</div>
<div class="t" style="left:613px;top:426px;font-size:12px;color:#222">view#bg2.page__bd</div>
<div class="t" style="left:730px;top:426px;font-size:12px;color:#222">form</div>
<div class="t" style="left:764px;top:426px;font-size:12px;color:#222">view.weui-cells.weui-cells_after-title</div>
<div class="t" style="left:963px;top:426px;font-size:12px;color:#222">view.weui-cell.weui-cell_input</div>
<div class="t" style="left:1130px;top:426px;font-size:12px;color:#222">view.weui-cell__bd</div>
<div class="a" style="left:434px;top:445px;width:826px;height:16px;background:#f1f1f1"></div>
<div class="a" style="left:451px;top:446px;width:774px;height:14px;background:#c1c1c1"></div>
<svg class="a" style="left:437px;top:448px" width="8" height="10"><path d="M6 1L2 5L6 9Z" fill="#a0a0a0"/></svg>
<svg class="a" style="left:1250px;top:448px" width="8" height="10"><path d="M2 1L6 5L2 9Z" fill="#505050"/></svg>

<!-- drawer -->
<div class="a" style="left:434px;top:461px;width:826px;height:28px;background:#f3f3f3;border-top:1px solid #cfcfcf;border-bottom:1px solid #cfcfcf"></div>
<svg class="a" style="left:448px;top:467px" width="4" height="15"><circle cx="2" cy="2.5" r="1.3" fill="#5a5a5a"/><circle cx="2" cy="7.5" r="1.3" fill="#5a5a5a"/><circle cx="2" cy="12.5" r="1.3" fill="#5a5a5a"/></svg>
<div class="a" style="left:467px;top:464px;width:53px;height:25px;background:#fff;border:1px solid #ddd;border-bottom:none"></div>
<div class="t" style="left:472px;top:471px;font-size:11.6px;color:#333">Console</div>
<div class="t" style="left:525px;top:471px;font-size:11.6px;color:#5a5a5a">What's New</div>
<svg class="a" style="left:1239px;top:468px" width="12" height="12"><path d="M1 1L11 11M11 1L1 11" stroke="#5a5a5a" stroke-width="1.6"/></svg>

<div class="a" style="left:434px;top:489px;width:826px;height:133px;background:#fff"></div>
<div class="hd" style="left:434px;top:515px;width:826px;background:#e0e0e0"></div>
<svg class="a" style="left:443px;top:495px" width="14" height="14"><circle cx="7" cy="7" r="5.6" stroke="#5a5a5a" stroke-width="1.7" fill="none"/><path d="M3 3L11 11" stroke="#5a5a5a" stroke-width="1.7"/></svg>
<div class="vd" style="left:468px;top:494px;height:16px;background:#ddd"></div>
<div class="t" style="left:478px;top:497px;font-size:12px;color:#333">top</div>
<svg class="a" style="left:597px;top:497px" width="10" height="8"><path d="M0.5 0.5H9.5L5 7.5Z" fill="#5a5a5a"/></svg>
<div class="vd" style="left:615px;top:494px;height:16px;background:#ddd"></div>
<div class="a" style="left:623px;top:493px;width:185px;height:18px;border:1px solid #ddd;background:#fff"></div>
<div class="t" style="left:627px;top:497px;font-size:12px;color:#888">Filter</div>
<div class="t" style="left:817px;top:497px;font-size:12px;color:#555">Default levels</div>
<svg class="a" style="left:893px;top:497px" width="10" height="8"><path d="M0.5 0.5H9.5L5 7.5Z" fill="#5a5a5a"/></svg>
<svg class="a" style="left:1237px;top:493px" width="16" height="16"><path d="M8 0.8L9.4 2.6L11.6 2L12.2 4.2L14.4 4.8L13.8 7L15.2 8.4L13.4 9.8L14 12L11.8 12.6L11.2 14.8L9 14.2L7.6 15.6L6.2 13.8L4 14.4L3.4 12.2L1.2 11.6L1.8 9.4L0.8 8L2.6 6.6L2 4.4L4.2 3.8L4.8 1.6L7 2.2Z" fill="#5a5a5a"/><circle cx="8" cy="8" r="2.6" fill="#fff"/></svg>
<svg class="a" style="left:443px;top:522px" width="8" height="10"><path d="M2 1.5L6 5L2 8.5" stroke="#3e82f7" stroke-width="1.5" fill="none"/></svg>

<!-- bottom status -->
<div class="a" style="left:7px;top:622px;width:1253px;height:29px;background:#edece8;border-top:1px solid #d4d4d4"></div>
<div class="t" style="-webkit-text-stroke:0.12px currentColor;left:17px;top:630px;font-size:12px;color:#777">页面路径</div>
<div class="t" style="left:77px;top:630px;font-size:12px;color:#222">pages/identity/userinfo</div>
<div class="t" style="-webkit-text-stroke:0.12px currentColor;left:201px;top:630px;font-size:12px;color:#5b7aa0">复制</div>
<div class="t" style="-webkit-text-stroke:0.12px currentColor;left:231px;top:630px;font-size:12px;color:#5b7aa0">打开</div>
<div class="vd" style="left:295px;top:623px;height:28px;background:#d8d8d8"></div>
<div class="t" style="-webkit-text-stroke:0.12px currentColor;left:312px;top:630px;font-size:12px;color:#777">场景值</div>
<div class="vd" style="left:364px;top:623px;height:28px;background:#d8d8d8"></div>
<div class="t" style="-webkit-text-stroke:0.12px currentColor;left:375px;top:630px;font-size:12px;color:#777">页面参数</div>
<div class="vd" style="left:433px;top:623px;height:28px;background:#d8d8d8"></div>
<div class="a" style="left:0;top:652px;width:1260px;height:5px;background:linear-gradient(180deg,#c6c6c6,#e2e2e2)"></div>
<div class="a" style="left:858px;top:652px;width:224px;height:5px;background:#e4e4e4;border-left:2px solid #111;border-right:2px solid #111"></div>
<div class="a" style="left:6px;top:0;width:1px;height:652px;background:#1a7fd8"></div>
<div class="a" style="left:6px;top:651px;width:1254px;height:1px;background:#1a7fd8"></div>

</body></html>
